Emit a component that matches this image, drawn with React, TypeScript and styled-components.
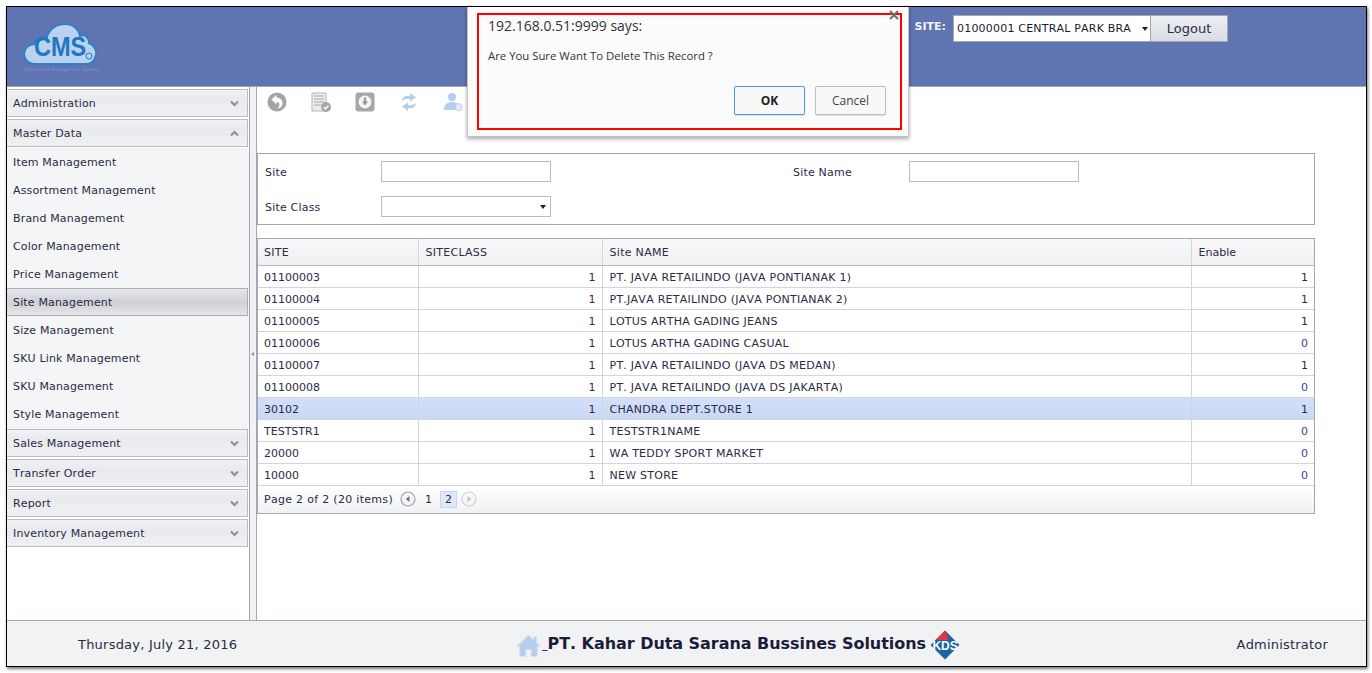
import React from "react";
import styled, { createGlobalStyle } from "styled-components";

const Global = createGlobalStyle`
  html, body { margin: 0; padding: 0; background: #fff; width: 1372px; height: 673px; overflow: hidden; }
  body { font-family: "DejaVu Sans", Verdana, sans-serif; font-size: 11px; color: #2b2b45; font-kerning: none; }
  * { box-sizing: border-box; }
`;

const Page = styled.div`
  position: relative;
  width: 1372px;
  height: 673px;
  padding: 6px;
  background: #fff;
`;
const Frame = styled.div`
  width: 1361px;
  height: 661px;
  border: 1px solid #000;
  box-shadow: 1px 2px 3px rgba(0, 0, 0, 0.55);
  display: flex;
  flex-direction: column;
  background: #fff;
`;
const Header = styled.header`
  flex: 0 0 80px;
  background: #5f74b1;
  border-bottom: 1px solid #a3a7b4;
  display: flex;
  justify-content: space-between;
  padding: 8px 138px 0 14px;
`;
const LogoBox = styled.div`
  position: relative;
  width: 80px;
  height: 64px;
`;
const LogoText = styled.span`
  position: absolute;
  left: 13px;
  top: 17px;
  font-family: "Liberation Sans", Arial, sans-serif;
  font-size: 28px;
  line-height: 30px;
  font-weight: 700;
  color: #2277c2;
  transform: scaleX(0.84);
  transform-origin: left top;
`;
const LogoTag = styled.span`
  position: absolute;
  left: 3px;
  top: 52px;
  font-size: 4.5px;
  line-height: 6px;
  white-space: nowrap;
  color: #7f98cf;
`;
const SiteBar = styled.div`
  display: flex;
  align-items: flex-start;
`;
const SiteLabel = styled.span`
  font-weight: 700;
  font-size: 11px;
  color: #f1f3f8;
  margin: 5px 7px 0 0;
`;
const SiteSelect = styled.div`
  width: 197px;
  height: 27px;
  background: #fff;
  border: 1px solid #a3a7b4;
  border-right: 0;
  display: flex;
  align-items: center;
  justify-content: space-between;
  padding: 0 2px 0 3px;
  color: #1a1a2e;
  white-space: nowrap;
  letter-spacing: 0.2px;
`;
const Caret = styled.i`
  display: block;
  width: 0;
  height: 0;
  border-left: 3.5px solid transparent;
  border-right: 3.5px solid transparent;
  border-top: 4px solid #222;
`;
const LogoutBtn = styled.div`
  width: 78px;
  height: 27px;
  border: 1px solid #a3a7b4;
  background: linear-gradient(#eceef2, #d9dce4);
  text-align: center;
  font-size: 13px;
  line-height: 25px;
  color: #2b2b45;
`;
const Middle = styled.div`
  flex: 1;
  display: flex;
  min-height: 0;
`;
const Sidebar = styled.nav`
  flex: 0 0 243px;
  border-right: 1px solid #a3a7b4;
  padding-top: 2px;
  display: flex;
  flex-direction: column;
  background: #fff;
  letter-spacing: 0.16px;
`;
const GroupHead = styled.div`
  height: 28px;
  margin: 0 1px 2px 0;
  border: 1px solid #b9bcc4;
  border-left: 0;
  background: linear-gradient(#f1f2f4 0%, #e9eaed 35%, #eff0f2 100%);
  display: flex;
  align-items: center;
  justify-content: space-between;
  padding: 0 8px 0 6px;
  color: #2b2b45;
`;
const Chevron = styled.svg`
  width: 9px;
  height: 7px;
  fill: none;
  stroke: #8b8f98;
  stroke-width: 2;
`;
const Items = styled.div`
  background: #f4f5f7;
  margin-top: -1px;
  padding-bottom: 1px;
  display: flex;
  flex-direction: column;
`;
const Item = styled.div<{ $active?: boolean }>`
  height: 28px;
  display: flex;
  align-items: center;
  padding-left: 6px;
  margin-right: 1px;
  color: #2b2b45;
  ${(p) =>
    p.$active &&
    `
    border: 1px solid #a9acb5;
    border-left: 0;
    background: linear-gradient(#e6e7ea 0%, #cfd1d6 50%, #e4e5e8 100%);
  `}
`;
const Splitter = styled.div`
  flex: 0 0 7px;
  background: #f1f2f4;
  border-right: 1px solid #a3a7b4;
  display: flex;
  align-items: center;
  justify-content: center;
`;
const SplitArrow = styled.i`
  display: block;
  width: 0;
  height: 0;
  margin-right: 1px;
  border-top: 2px solid transparent;
  border-bottom: 2px solid transparent;
  border-right: 3px solid #8b8f98;
`;
const Content = styled.main`
  flex: 1;
  background: #fff;
`;
const Toolbar = styled.div`
  height: 66px;
  display: flex;
  align-items: flex-start;
  padding: 5px 0 0 10px;
`;
const ToolIcon = styled.svg`
  width: 20px;
  height: 20px;
  margin-right: 24px;
  flex: none;
`;
const FilterBox = styled.section`
  width: 1058px;
  height: 72px;
  border: 1px solid #a3a7b4;
  display: grid;
  grid-template-columns: 116px 170px 242px 116px 170px;
  grid-template-rows: 21px 21px;
  row-gap: 14px;
  padding: 7px 0 0 7px;
  align-items: center;
`;
const FilterLabel = styled.label`
  color: #2b2b45;
  padding-top: 2px;
  letter-spacing: 0.2px;
`;
const FilterInput = styled.div`
  height: 21px;
  border: 1px solid #b9bcc4;
  background: #fff;
  display: flex;
  align-items: center;
  justify-content: flex-end;
  padding-right: 4px;
`;
const Spacer = styled.span``;
const TableWrap = styled.section`
  width: 1058px;
  margin-top: 13px;
  border: 1px solid #a3a7b4;
`;
const Table = styled.table`
  width: 100%;
  border-collapse: collapse;
  table-layout: fixed;
`;
const Th = styled.th`
  height: 26px;
  background: linear-gradient(#f8f8fa, #eff0f2);
  border-right: 1px solid #d3d5da;
  border-bottom: 1px solid #b9bcc4;
  font-weight: 400;
  text-align: left;
  padding: 1px 6px 0 7px;
  color: #2b2b45;
  letter-spacing: 0.3px;
  &:first-child { padding-left: 6px; }
  &:last-child { border-right: 0; letter-spacing: 0; }
`;
const Tr = styled.tr<{ $selected?: boolean }>`
  background: ${(p) => (p.$selected ? "linear-gradient(#d3e0f9, #c9d8f5)" : "#fff")};
`;
const Td = styled.td<{ $right?: boolean; $zero?: boolean; $name?: boolean }>`
  height: 22px;
  padding: 3px 6px 0 ${(p) => (p.$name ? "7px" : "6px")};
  border-right: 1px solid #d3d5da;
  border-bottom: 1px solid #d3d5da;
  text-align: ${(p) => (p.$right ? "right" : "left")};
  color: ${(p) => (p.$zero ? "#3f3f80" : "#2b2b45")};
  letter-spacing: ${(p) => (p.$name ? "0.25px" : "0")};
  white-space: nowrap;
  &:last-child { border-right: 0; }
`;
const Pager = styled.div`
  height: 27px;
  background: linear-gradient(#fff, #f0f1f3);
  display: flex;
  align-items: center;
  padding-left: 6px;
`;
const PageInfo = styled.span`
  margin-right: 7px;
  letter-spacing: 0.3px;
`;
const PageArrow = styled.svg<{ $dim?: boolean }>`
  width: 16px;
  height: 16px;
  opacity: ${(p) => (p.$dim ? 0.4 : 1)};
`;
const PageNum = styled.span<{ $current?: boolean }>`
  width: 17px;
  height: 17px;
  display: flex;
  align-items: center;
  justify-content: center;
  margin: ${(p) => (p.$current ? "0 4px 0 3px" : "0 0 0 4px")};
  border: 1px solid ${(p) => (p.$current ? "#c5d7f7" : "transparent")};
  background: ${(p) => (p.$current ? "#dde8fb" : "transparent")};
`;
const Footer = styled.footer`
  flex: 0 0 46px;
  border-top: 1px solid #a3a7b4;
  background: #f1f2f4;
  display: grid;
  grid-template-columns: 438px auto 1fr;
  align-items: center;
  font-size: 13px;
  padding: 1px 38px 0 71px;
  color: #2b2b45;
`;
const FooterDate = styled.span`
  letter-spacing: 0.22px;
`;
const Brand = styled.div`
  display: flex;
  align-items: center;
  font-size: 16px;
  font-weight: 700;
  color: #1c1c3a;
  letter-spacing: -0.05px;
  margin-top: -2px;
`;
const BrandHome = styled.svg`
  width: 25px;
  height: 25px;
  margin: 4px 1px 0 0;
`;
const BrandLink = styled.span`
  text-decoration: underline;
  text-decoration-color: #3d2aa0;
  white-space: pre;
`;
const BrandMark = styled.svg`
  width: 30px;
  height: 30px;
  margin: 4px 0 0 4px;
`;
const FooterUser = styled.span`
  text-align: right;
  letter-spacing: 0.2px;
`;
const Dialog = styled.div`
  position: absolute;
  left: 467px;
  top: 7px;
  width: 442px;
  height: 130px;
  background: #fbfbfb;
  border: 1px solid #c4c4c4;
  border-top: 0;
  box-shadow: 0 2px 4px rgba(0, 0, 0, 0.35);
  font-family: "Open Sans", "Noto Sans", sans-serif;
  color: #333;
`;
const RedBox = styled.div`
  position: absolute;
  left: 9px;
  top: 6px;
  width: 425px;
  height: 117px;
  border: 2px solid #fe0000;
`;
const CloseX = styled.svg`
  position: absolute;
  left: 421px;
  top: 3px;
  width: 10px;
  height: 10px;
  stroke: #6e6e6e;
  stroke-width: 2;
`;
const DialogTitle = styled.div`
  position: absolute;
  left: 20px;
  top: 9px;
  font-size: 14px;
  line-height: 20px;
  white-space: nowrap;
`;
const DialogMsg = styled.div`
  position: absolute;
  left: 20px;
  top: 41px;
  font-size: 11.35px;
  line-height: 16px;
  white-space: nowrap;
`;
const DialogButtons = styled.div`
  position: absolute;
  left: 266px;
  top: 79px;
  display: flex;
  gap: 10px;
`;
const DlgBtn = styled.div<{ $primary?: boolean }>`
  width: 71px;
  height: 29px;
  border: 1px solid ${(p) => (p.$primary ? "#4d90fe" : "#bdbdbd")};
  border-radius: 2px;
  background: #f8f8f8;
  box-shadow: 0 1px 1px rgba(0, 0, 0, 0.12);
  text-align: center;
  font-size: 12px;
  line-height: 27px;
  font-weight: ${(p) => (p.$primary ? 700 : 400)};
  color: ${(p) => (p.$primary ? "#222" : "#444")};
`;

const groupsTop = ["Administration"];
const items = [
  "Item Management",
  "Assortment Management",
  "Brand Management",
  "Color Management",
  "Price Management",
  "Site Management",
  "Size Management",
  "SKU Link Management",
  "SKU Management",
  "Style Management",
];
const groupsBottom = ["Sales Management", "Transfer Order", "Report", "Inventory Management"];
const rows: [string, string, string, string, boolean?][] = [
  ["01100003", "1", "PT. JAVA RETAILINDO (JAVA PONTIANAK 1)", "1"],
  ["01100004", "1", "PT.JAVA RETAILINDO (JAVA PONTIANAK 2)", "1"],
  ["01100005", "1", "LOTUS ARTHA GADING JEANS", "1"],
  ["01100006", "1", "LOTUS ARTHA GADING CASUAL", "0"],
  ["01100007", "1", "PT. JAVA RETAILINDO (JAVA DS MEDAN)", "1"],
  ["01100008", "1", "PT. JAVA RETAILINDO (JAVA DS JAKARTA)", "0"],
  ["30102", "1", "CHANDRA DEPT.STORE 1", "1", true],
  ["TESTSTR1", "1", "TESTSTR1NAME", "0"],
  ["20000", "1", "WA TEDDY SPORT MARKET", "0"],
  ["10000", "1", "NEW STORE", "0"],
];

const Down = () => (
  <Chevron viewBox="0 0 9 7">
    <path d="M1 1.5 L4.5 5 L8 1.5" />
  </Chevron>
);
const Up = () => (
  <Chevron viewBox="0 0 9 7">
    <path d="M1 5.5 L4.5 2 L8 5.5" />
  </Chevron>
);

export default function App() {
  return (
    <Page>
      <Global />
      <Frame>
        <Header>
          <LogoBox>
            <svg width="80" height="54" viewBox="0 0 80 54">
              <path
                d="M14 49 C6 49 3 43 3 39 C3 33 8 29 14 29 C15 24 20 21 26 22 C28 14 36 9 44 9 C52 9 58 14 59 21 C63 19 68 22 68 28 C73 30 76 35 75 40 C74 46 70 49 65 49 Z"
                fill="#b8d2ef"
                stroke="#2f80c8"
                strokeWidth="2"
              />
              <circle cx="68" cy="41" r="3" fill="none" stroke="#2277c2" strokeWidth="1" />
            </svg>
            <LogoText>CMS</LogoText>
            <LogoTag>Centralized Management System</LogoTag>
          </LogoBox>
          <SiteBar>
            <SiteLabel>SITE:</SiteLabel>
            <SiteSelect>
              01000001 CENTRAL PARK BRA
              <Caret />
            </SiteSelect>
            <LogoutBtn>Logout</LogoutBtn>
          </SiteBar>
        </Header>
        <Middle>
          <Sidebar>
            {groupsTop.map((g) => (
              <GroupHead key={g}>
                {g}
                <Down />
              </GroupHead>
            ))}
            <GroupHead>
              Master Data
              <Up />
            </GroupHead>
            <Items>
              {items.map((i) => (
                <Item key={i} $active={i === "Site Management"}>
                  {i}
                </Item>
              ))}
            </Items>
            {groupsBottom.map((g) => (
              <GroupHead key={g}>
                {g}
                <Down />
              </GroupHead>
            ))}
          </Sidebar>
          <Splitter>
            <SplitArrow />
          </Splitter>
          <Content>
            <Toolbar>
              <ToolIcon viewBox="0 0 20 20">
                <circle cx="10" cy="10" r="9.5" fill="#a4a4a4" />
                <path d="M4.5 7.5 L9.5 3 V5.8 C13.5 5.8 16 8.5 15.5 12 C15 15 12.5 16.5 10 16.5 C12.5 15 13 12.5 12 11 C11.5 10.2 10.7 10 9.5 10 V12.5 Z" fill="#fff" />
              </ToolIcon>
              <ToolIcon viewBox="0 0 20 20">
                <path d="M1 1 H15 V19 H1 Z" fill="#ececec" stroke="#b5b5b5" />
                <path d="M3 4 H13 M3 7 H13 M3 10 H13 M3 13 H10" stroke="#a8a8a8" strokeWidth="1.2" />
                <circle cx="15" cy="15" r="5" fill="#a4a4a4" />
                <path d="M12.7 15 L14.5 17 L17.5 13.5" stroke="#fff" strokeWidth="1.4" fill="none" />
              </ToolIcon>
              <ToolIcon viewBox="0 0 20 20">
                <rect x="0.5" y="0.5" width="19" height="19" rx="3" fill="#a6a6a6" />
                <circle cx="10" cy="10" r="6.5" fill="#f4f4f4" />
                <path d="M8.8 5.5 H11.2 V9.5 H13 L10 13.5 L7 9.5 H8.8 Z" fill="#9a9a9a" />
              </ToolIcon>
              <ToolIcon viewBox="0 0 20 20">
                <path d="M3 9 C3 5 7 3 11 4 V1 L17 5.5 L11 9.5 V7 C8 6.5 6 7 3 9 Z" fill="#b3cfee" />
                <path d="M17 11 C17 15 13 17 9 16 V19 L3 14.5 L9 10.5 V13 C12 13.5 14 13 17 11 Z" fill="#b3cfee" />
              </ToolIcon>
              <ToolIcon viewBox="0 0 20 20">
                <circle cx="9" cy="5" r="4" fill="#b3cfee" />
                <path d="M1 18 C1 12 5 10 9 10 C13 10 16 12 16 18 Z" fill="#b3cfee" />
                <circle cx="15.5" cy="15" r="3.5" fill="#e3edf9" stroke="#b3cfee" />
              </ToolIcon>
            </Toolbar>
            <FilterBox>
              <FilterLabel>Site</FilterLabel>
              <FilterInput />
              <Spacer />
              <FilterLabel>Site Name</FilterLabel>
              <FilterInput />
              <FilterLabel>Site Class</FilterLabel>
              <FilterInput>
                <Caret />
              </FilterInput>
            </FilterBox>
            <TableWrap>
              <Table>
                <colgroup>
                  <col style={{ width: 160 }} />
                  <col style={{ width: 184 }} />
                  <col style={{ width: 589 }} />
                  <col />
                </colgroup>
                <thead>
                  <tr>
                    <Th>SITE</Th>
                    <Th>SITECLASS</Th>
                    <Th>Site NAME</Th>
                    <Th>Enable</Th>
                  </tr>
                </thead>
                <tbody>
                  {rows.map((r) => (
                    <Tr key={r[0]} $selected={r[4]}>
                      <Td>{r[0]}</Td>
                      <Td $right>{r[1]}</Td>
                      <Td $name>{r[2]}</Td>
                      <Td $right $zero={r[3] === "0"}>
                        {r[3]}
                      </Td>
                    </Tr>
                  ))}
                </tbody>
              </Table>
              <Pager>
                <PageInfo>Page 2 of 2 (20 items)</PageInfo>
                <PageArrow viewBox="0 0 16 16">
                  <circle cx="8" cy="8" r="7" fill="#f4f4f6" stroke="#a0a0a8" strokeWidth="1.2" />
                  <path d="M9.5 5 V11 L5.8 8 Z" fill="#70707a" />
                </PageArrow>
                <PageNum>1</PageNum>
                <PageNum $current>2</PageNum>
                <PageArrow viewBox="0 0 16 16" $dim>
                  <circle cx="8" cy="8" r="7" fill="#f4f4f6" stroke="#a0a0a8" strokeWidth="1.2" />
                  <path d="M6.5 5 V11 L10.2 8 Z" fill="#70707a" />
                </PageArrow>
              </Pager>
            </TableWrap>
          </Content>
        </Middle>
        <Footer>
          <FooterDate>Thursday, July 21, 2016</FooterDate>
          <Brand>
            <BrandHome viewBox="0 0 24 24">
              <path d="M12 2 L17 6.5 V3.5 H20 V9.5 L23.5 13 H20.5 V22.5 H14.5 V16 H9.5 V22.5 H3.5 V13 H0.5 Z" fill="#b3cfee" stroke="#dfe1e4" />
            </BrandHome>
            <BrandLink> </BrandLink>
            PT. Kahar Duta Sarana Bussines Solutions
            <BrandMark viewBox="0 0 30 30">
              <path d="M15 0.5 L29.5 15 L15 29.5 L0.5 15 Z" fill="#1b63a8" />
              <path d="M15 0.5 L19 10 H5.5 Z" fill="#e0383e" />
              <text
                x="15"
                y="19.5"
                textAnchor="middle"
                fontFamily="Liberation Sans, sans-serif"
                fontSize="12"
                fontWeight="700"
                fill="#fff"
              >
                KDS
              </text>
            </BrandMark>
          </Brand>
          <FooterUser>Administrator</FooterUser>
        </Footer>
      </Frame>
      <Dialog>
        <RedBox />
        <CloseX viewBox="0 0 10 10">
          <path d="M1 1 L9 9 M9 1 L1 9" />
        </CloseX>
        <DialogTitle>192.168.0.51:9999 says:</DialogTitle>
        <DialogMsg>Are You Sure Want To Delete This Record ?</DialogMsg>
        <DialogButtons>
          <DlgBtn $primary>OK</DlgBtn>
          <DlgBtn>Cancel</DlgBtn>
        </DialogButtons>
      </Dialog>
    </Page>
  );
}
